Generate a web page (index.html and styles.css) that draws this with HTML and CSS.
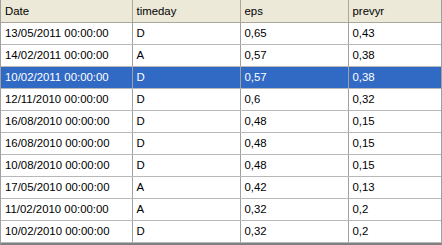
FILE: index.html
```html
<!DOCTYPE html>
<html>
<head>
<meta charset="utf-8">
<link rel="stylesheet" href="styles.css">
</head>
<body>
<div class="grid">
<table class="data">
<colgroup><col class="c1"><col class="c2"><col class="c3"><col class="c4"></colgroup>
<thead>
<tr><th>Date</th><th>timeday</th><th>eps</th><th>prevyr</th></tr>
</thead>
<tbody>
<tr><td>13/05/2011 00:00:00</td><td>D</td><td>0,65</td><td>0,43</td></tr>
<tr><td>14/02/2011 00:00:00</td><td>A</td><td>0,57</td><td>0,38</td></tr>
<tr class="sel"><td>10/02/2011 00:00:00</td><td>D</td><td>0,57</td><td>0,38</td></tr>
<tr><td>12/11/2010 00:00:00</td><td>D</td><td>0,6</td><td>0,32</td></tr>
<tr><td>16/08/2010 00:00:00</td><td>D</td><td>0,48</td><td>0,15</td></tr>
<tr><td>16/08/2010 00:00:00</td><td>D</td><td>0,48</td><td>0,15</td></tr>
<tr><td>10/08/2010 00:00:00</td><td>D</td><td>0,48</td><td>0,15</td></tr>
<tr><td>17/05/2010 00:00:00</td><td>A</td><td>0,42</td><td>0,13</td></tr>
<tr><td>11/02/2010 00:00:00</td><td>A</td><td>0,32</td><td>0,2</td></tr>
<tr><td>10/02/2010 00:00:00</td><td>D</td><td>0,32</td><td>0,2</td></tr>
</tbody>
</table>
</div>
</body>
</html>
```
FILE: styles.css
```css
html, body {
  margin: 0;
  padding: 0;
  background: #ffffff;
}
.grid {
  width: 442px;
  height: 245px;
  box-sizing: border-box;
  border-left: 1px solid #a0a0a0;
  border-right: 1px solid #a0a0a0;
  border-bottom: 2px solid #808080;
  background: #ffffff;
  overflow: hidden;
}
.data {
  border-collapse: collapse;
  table-layout: fixed;
  width: 440px;
  font-family: "Liberation Sans", Arial, sans-serif;
  font-size: 11.4px;
  color: #000000;
}
.c1 { width: 131px; }
.c2 { width: 108px; }
.c3 { width: 108px; }
.c4 { width: 93px; }
.data th {
  background: #ece9d8;
  font-weight: normal;
  text-align: left;
  height: 22px;
  padding: 0 0 0 4px;
  border-right: 1px solid #aca899;
  border-bottom: 1px solid #aca899;
  white-space: nowrap;
  box-sizing: border-box;
}
.data td {
  height: 21px;
  padding: 0 0 0 4px;
  border-right: 1px solid #a0a0a0;
  border-bottom: 1px solid #b8b8b8;
  white-space: nowrap;
}
.data tr.sel td {
  background: #316ac5;
  color: #ffffff;
}
```
